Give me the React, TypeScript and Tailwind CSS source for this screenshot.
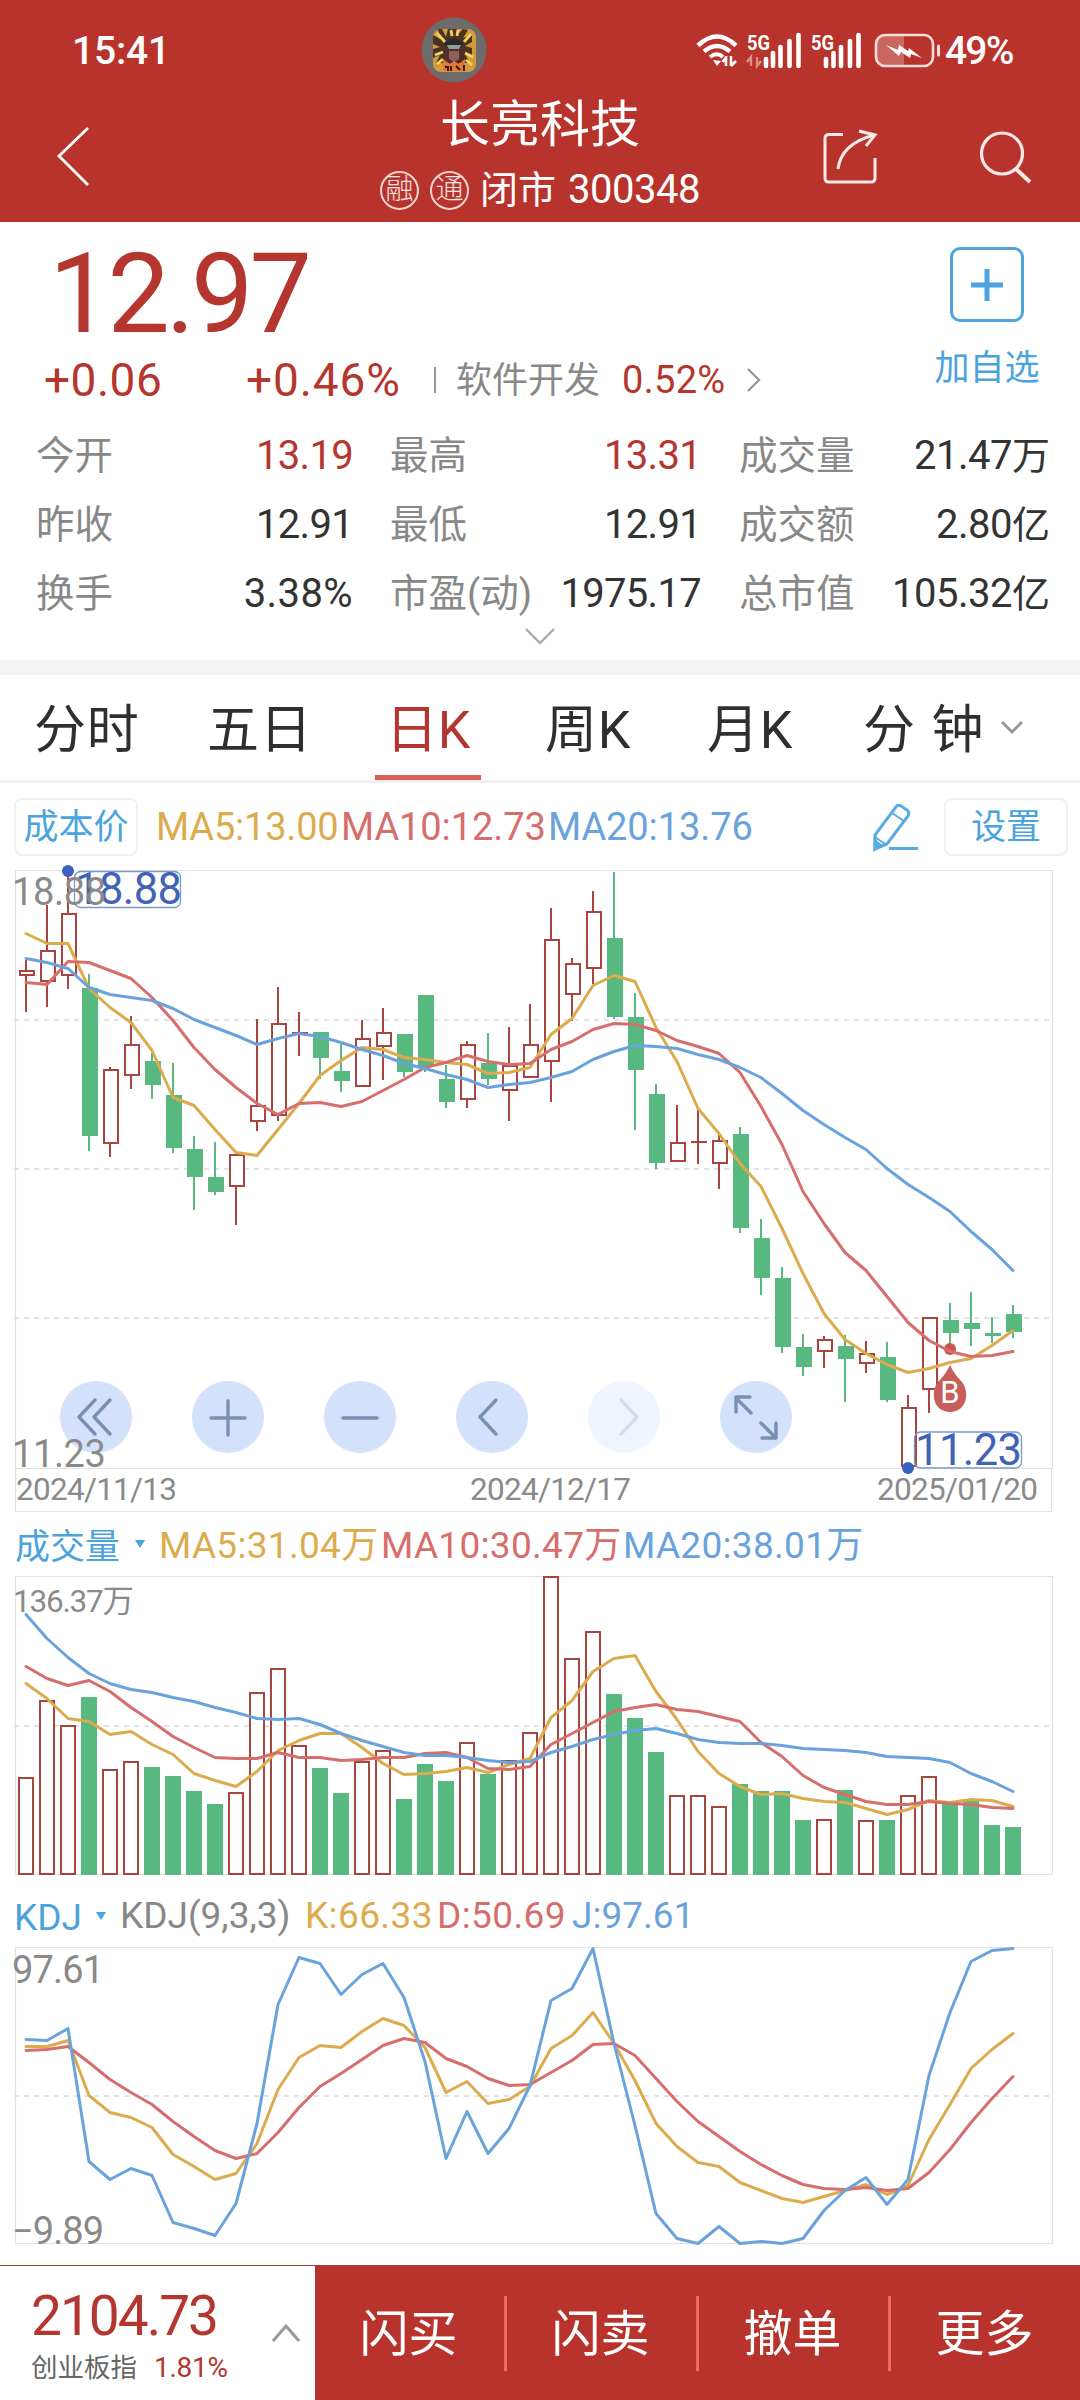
import React from 'react';
import clsx from 'clsx';

const RED = '#a8453e';
const GREEN = '#57b97f';
const YELLOW = '#dcab4e';
const ROSE = '#d66e6b';
const BLUE = '#6aa2dc';
const GRID = '#e2e2e2';

// up/down, high, body top, body bottom, low
type Candle = [string, number, number, number, number];

const candles: Candle[] = [
  ['u', 90, 100, 106, 142], ['u', 35, 80, 112, 137], ['u', 0, 43, 106, 119], ['d', 104, 118, 266, 281],
  ['u', 197, 199, 274, 287], ['u', 146, 174, 206, 219], ['d', 183, 191, 215, 229], ['d', 193, 225, 278, 283],
  ['d', 266, 279, 307, 340], ['d', 272, 307, 322, 325], ['u', 284, 284, 317, 355], ['u', 149, 235, 252, 261],
  ['u', 117, 153, 246, 251], ['u', 142, 162, 164, 186], ['d', 162, 162, 188, 209], ['d', 174, 201, 211, 222],
  ['u', 150, 168, 217, 217], ['u', 138, 162, 177, 210], ['d', 164, 164, 202, 207], ['d', 125, 125, 197, 202],
  ['d', 195, 209, 232, 238], ['u', 171, 174, 230, 238], ['d', 163, 193, 209, 215], ['u', 157, 195, 221, 251],
  ['u', 134, 174, 208, 208], ['u', 38, 69, 192, 232], ['u', 88, 93, 125, 151], ['u', 21, 41, 99, 114],
  ['d', 2, 68, 147, 149], ['d', 123, 147, 200, 260], ['d', 214, 224, 293, 299], ['u', 235, 272, 292, 292],
  ['u', 237, 271, 273, 294], ['u', 263, 270, 294, 319], ['d', 257, 264, 358, 363], ['d', 349, 368, 408, 425],
  ['d', 397, 408, 477, 483], ['d', 464, 477, 497, 506], ['u', 466, 469, 482, 498], ['d', 465, 476, 489, 532],
  ['u', 471, 483, 494, 503], ['d', 472, 487, 530, 532], ['u', 525, 537, 597, 597], ['u', 447, 447, 520, 543],
  ['d', 433, 450, 463, 477], ['d', 422, 453, 459, 476], ['d', 447, 463, 466, 473], ['d', 435, 444, 462, 468],
];

const priceMa = {
  ma5: [63, 73, 73, 118, 137, 152, 180, 227, 235, 259, 282, 285, 259, 233, 205, 190, 177, 179, 187, 189, 192, 194, 203, 202, 197, 164, 148, 115, 105, 111, 157, 191, 238, 263, 293, 316, 358, 403, 443, 469, 483, 494, 502, 498, 492, 488, 475, 460],
  ma10: [112, 114, 91, 92, 100, 108, 127, 150, 177, 199, 217, 233, 244, 233, 232, 236, 231, 220, 209, 197, 192, 185, 191, 194, 193, 179, 171, 159, 153, 154, 160, 170, 176, 183, 202, 236, 274, 321, 353, 382, 400, 426, 452, 470, 481, 486, 485, 481],
  ma20: [88, 92, 98, 117, 124, 127, 130, 138, 149, 157, 165, 174, 168, 163, 166, 172, 179, 185, 193, 198, 204, 209, 217, 214, 212, 207, 201, 189, 181, 175, 176, 178, 184, 189, 197, 207, 223, 240, 254, 267, 279, 298, 314, 327, 341, 361, 379, 400],
};

const volumes = [201, 124, 149, 121, 193, 185, 191, 200, 215, 228, 216, 116, 92, 169, 192, 217, 185, 174, 223, 188, 205, 166, 198, 184, 156, 0, 82, 55, 118, 142, 176, 219, 219, 230, 208, 215, 215, 244, 243, 214, 244, 244, 219, 200, 228, 224, 249, 251];

const volumeMa = {
  ma5: [107, 122, 142, 145, 158, 155, 168, 178, 197, 204, 210, 195, 174, 164, 157, 157, 171, 187, 198, 197, 195, 191, 196, 188, 182, 141, 124, 95, 82, 79, 115, 143, 175, 197, 210, 218, 217, 222, 225, 226, 232, 238, 233, 224, 226, 223, 224, 230],
  ma10: [90, 102, 109, 104, 115, 131, 145, 160, 171, 181, 182, 182, 176, 181, 181, 184, 183, 181, 181, 177, 176, 181, 192, 193, 190, 168, 157, 146, 135, 131, 128, 133, 135, 140, 145, 166, 180, 199, 211, 218, 225, 228, 228, 225, 227, 228, 231, 232],
  ma20: [38, 62, 81, 97, 107, 113, 116, 121, 125, 131, 136, 142, 143, 142, 148, 157, 164, 170, 176, 179, 179, 181, 184, 186, 185, 176, 170, 163, 158, 154, 152, 157, 163, 166, 167, 167, 169, 172, 173, 174, 176, 180, 181, 182, 186, 197, 205, 215],
};

const kdj = {
  k: [99, 99, 93, 148, 165, 170, 180, 207, 219, 232, 226, 196, 142, 110, 98, 100, 84, 71, 78, 100, 145, 134, 156, 152, 139, 101, 88, 65, 96, 133, 176, 199, 215, 219, 235, 243, 251, 255, 249, 243, 237, 247, 238, 192, 157, 121, 102, 86],
  d: [103, 102, 99, 115, 132, 145, 157, 174, 189, 203, 211, 206, 185, 160, 139, 126, 112, 98, 91, 95, 111, 119, 131, 138, 137, 125, 113, 97, 96, 108, 131, 154, 174, 189, 204, 217, 228, 237, 241, 242, 240, 243, 241, 225, 202, 175, 151, 129],
  j: [92, 93, 81, 214, 232, 221, 228, 275, 281, 288, 256, 176, 57, 10, 16, 47, 27, 16, 50, 114, 211, 164, 206, 181, 138, 53, 41, 1, 96, 178, 266, 291, 296, 279, 296, 294, 296, 291, 263, 243, 230, 257, 232, 128, 65, 14, 3, 1],
};

const cx = (i: number) => 26 + i * 21;

const Line = ({ data, color }: { data: number[]; color: string }) => (
  <polyline
    points={data.map((y, i) => `${cx(i)},${y + 0.5}`).join(' ')}
    fill="none"
    stroke={color}
    strokeWidth="3"
    strokeLinejoin="round"
    strokeLinecap="round"
  />
);

const Dashed = ({ y }: { y: number }) => (
  <line x1="14" x2="1049" y1={y} y2={y} stroke={GRID} strokeWidth="2" strokeDasharray="5 5" />
);

type LabelProps = {
  x: number;
  y: number;
  width: number;
  size: number;
  color?: string;
  children: string;
};

const Label = ({ x, y, width, size, color = '#8a8a8a', children }: LabelProps) => (
  <text x={x} y={y} fontSize={size} textLength={width} fill={color}>
    {children}
  </text>
);

const StatusBar = () => (
  <div className="flex h-[84px] items-start text-white">
    <span className="ml-[72px] mt-[28px] w-[349px] text-[39px] font-medium leading-[46px] tracking-[-0.2px]">15:41</span>
    <svg className="mt-[17px] h-[66px] w-[66px]" viewBox="0 0 66 66">
      <circle cx="33" cy="33" r="32.5" fill="#6e6b6c" />
      <rect x="12" y="12" width="43" height="43" rx="8" fill="#d59a3c" />
      <path d="M12 18l7 4-2-10h4l4 8 2-8h9l-1 7 7-7 5 1-5 8 9-3v7l-7 4 7 2v9l-7-3 5 9H15l4-8-7 3V32l7-2-7-3z" fill="#4a3323" />
      <path d="M16 16l8 9M50 17l-7 8M14 38l8-3M52 40l-8-4M30 13l1 6M37 13l-1 6M16 47l6-5M51 48l-6-5" stroke="#f3d35b" strokeWidth="2.8" />
      <path d="M24 27q9-12 18 0v12l-5 9h-8l-5-9z" fill="#51302b" />
      <path d="M23 27q10-11 20 0l-2 2H25z" fill="#2b2a28" />
      <path d="M26 28h14l-2 4H28z" fill="#8fa09a" />
      <path d="M28 34h10v8l-5 3-5-3z" fill="#8f6058" />
      <path d="M22 42l7 5 4-3 5 3 6-5v12H22z" fill="#e07a35" />
      <path d="M24 50h3v4M30 49v5M35 49l4 4M43 48v6" stroke="#231612" strokeWidth="1.8" fill="none" />
    </svg>
    <svg className="ml-[208px] mt-[32px] h-[38px] w-[250px]" viewBox="695 32 250 38" fill="none">
      <path d="M698 45.500q19-18 38 0" stroke="#fff" strokeWidth="4.500" />
      <path d="M704 51.500q13-11 26 0" stroke="#fff" strokeWidth="4.500" />
      <path d="M710 57q7-5.500 13 0" stroke="#fff" strokeWidth="4" />
      <path d="M713 60l8 1-4 5z" fill="#fff" />
      <path d="M726 56v10M726.500 57l-4 5M731 66V56M731 66l5-5" stroke="#fff" strokeWidth="2.600" />
      <path d="M751 66v-9l-4 5M757 57v9l4-5" stroke="#db8d88" strokeWidth="2.400" />
      <path d="M766 66v-7M773 66V53M780.500 66V47M789.500 66V41M798.500 66V35" stroke="#fff" strokeWidth="4.600" strokeLinecap="round" />
      <path d="M826 66v-7M833.500 66V53M841 66V47M850 66V41M858.500 66V35" stroke="#fff" strokeWidth="4.600" strokeLinecap="round" />
      <text x="747" y="50" fontSize="20" fontWeight="700" fill="#fff" textLength="23" lengthAdjust="spacingAndGlyphs">5G</text>
      <text x="811" y="50" fontSize="20" fontWeight="700" fill="#fff" textLength="23" lengthAdjust="spacingAndGlyphs">5G</text>
      <path d="M885 35h19v31h-19q-9 0-9-9V44q0-9 9-9z" fill="#cb6661" />
      <rect x="876" y="35" width="57" height="31" rx="9" stroke="#f7dedd" strokeWidth="2.600" />
      <path d="M938.500 46v9" stroke="#f7dedd" strokeWidth="3" strokeLinecap="round" />
      <path d="M886 45l12 5 1-5 9 6 1-3 13 10-11-4-1 4-9-6-2 4z" fill="#fff" />
    </svg>
    <span className="mt-[28px] text-[39px] font-medium leading-[46px] tracking-[-1.8px]">49%</span>
  </div>
);

const TitleBar = () => (
  <div className="flex h-[138px] items-start text-white">
    <svg className="ml-[55px] mt-[42px] h-[62px] w-[38px]" viewBox="0 0 38 62" fill="none" stroke="#fff" strokeWidth="2.8">
      <path d="M33 2L4 30l29 29" />
    </svg>
    <div className="ml-[286px] flex w-[322px] flex-col items-center">
      <h1 className="mt-[13px] text-[50px] leading-[56px]">长亮科技</h1>
      <div className="mt-[9px] flex h-[56px] items-center whitespace-nowrap">
        <span className="flex h-[39px] w-[39px] items-center justify-center rounded-full border-2 border-[#f3d5d3] text-[28px] font-light leading-none text-[#f7e4e3]">融</span>
        <span className="ml-[11px] flex h-[39px] w-[39px] items-center justify-center rounded-full border-2 border-[#f3d5d3] text-[28px] font-light leading-none text-[#f7e4e3]">通</span>
        <span className="ml-[11px] text-[38px]">闭市</span>
        <span className="ml-[12px] text-[40px] tracking-[-0.5px]">300348</span>
      </div>
    </div>
    <svg className="ml-[119px] mt-[44px] h-[60px] w-[60px]" viewBox="820 128 60 60" fill="none" stroke="#fbe9e8" strokeWidth="3">
      <path d="M843 134.500h-14q-4 0-4 4V178q0 4 4 4h42q4 0 4-4v-20" />
      <path d="M838 169q3-25 36-34M859 131l16 4-9 11" />
    </svg>
    <svg className="ml-[96px] mt-[44px] h-[60px] w-[60px]" viewBox="976 128 60 60" fill="none" stroke="#fbe9e8" strokeWidth="3.2">
      <circle cx="1002" cy="153.500" r="20.500" />
      <path d="M1016 169l14 13" strokeWidth="4" />
    </svg>
  </div>
);

const stats = [
  ['今开', '13.19', '最高', '13.31', '成交量', '21.47', '万'],
  ['昨收', '12.91', '最低', '12.91', '成交额', '2.80', '亿'],
  ['换手', '3.38%', '市盈(动)', '1975.17', '总市值', '105.32', '亿'],
];

const Quote = () => (
  <section className="h-[438px] bg-white">
    <div className="flex h-[200px] justify-between">
      <div>
        <div className="ml-[49px] mt-[7px] h-[131px] text-[111px] leading-[131px] tracking-[-4px] text-[#b5362e]">12.97</div>
        <div className="mt-[-3px] flex h-[46px] items-center whitespace-nowrap text-[#b5362e]">
          <span className="ml-[44px] w-[202px] text-[46px] tracking-[0.5px]">+0.06</span>
          <span className="w-[188px] text-[46px] tracking-[0.9px]">+0.46%</span>
          <span className="h-[26px] w-[2px] bg-[#999]" />
          <span className="ml-[20px] mt-[2px] text-[36px] text-[#888]">软件开发</span>
          <span className="ml-[22px] w-[124px] text-[38px] tracking-[0.3px]">0.52%</span>
          <svg className="h-[26px] w-[16px]" viewBox="0 0 16 26" fill="none" stroke="#999" strokeWidth="2.4">
            <path d="M2 2l11 11L2 24" />
          </svg>
        </div>
      </div>
      <div className="mr-[41px] flex w-[104px] flex-col items-center">
        <div className="mt-[25px] flex h-[75px] w-[74px] items-center justify-center rounded-[10px] border-[3px] border-[#4fa3dd]">
          <svg className="h-[34px] w-[34px]" viewBox="0 0 34 34" stroke="#4ba3e3" strokeWidth="5">
            <path d="M17 1v32M1 17h32" />
          </svg>
        </div>
        <span className="mt-[22px] whitespace-nowrap text-[35px] leading-[50px] text-[#4ba3dd]">加自选</span>
      </div>
    </div>
    <div className="flex flex-col">
      {stats.map((row, i) => (
        <div key={row[0]} className="flex h-[69px] items-center pb-[2px] text-[38.5px] text-[#888]">
          <div className="ml-[36px] flex w-[317px] items-center justify-between">
            <span>{row[0]}</span>
            <span className={clsx('text-[40px]', i === 0 && 'tracking-[-0.7px] text-[#b5362e]', i === 1 && 'tracking-[-0.7px] text-[#333]', i === 2 && 'tracking-[0.4px] text-[#333]')}>{row[1]}</span>
          </div>
          <div className="ml-[37px] flex w-[311px] items-center justify-between">
            <span>{row[2]}</span>
            <span className={clsx('text-[40px] tracking-[-0.7px]', i === 0 ? 'text-[#b5362e]' : 'text-[#333]')}>{row[3]}</span>
          </div>
          <div className="ml-[38px] flex w-[311px] items-center justify-between">
            <span>{row[4]}</span>
            <span className="text-[38px] text-[#333]">
              <span className="text-[40px] tracking-[-0.5px]">{row[5]}</span>
              {row[6]}
            </span>
          </div>
        </div>
      ))}
    </div>
    <svg className="mx-auto mt-[-1px] h-[18px] w-[32px]" viewBox="0 0 32 18" fill="none" stroke="#aaa" strokeWidth="2.4">
      <path d="M2 1l14 14L30 1" />
    </svg>
  </section>
);

const Tabs = () => (
  <nav className="flex h-[108px] items-center whitespace-nowrap border-b-[3px] border-[#f1f1f1] text-[52px] text-[#2f2f2f]">
    <span className="ml-[34px] mt-[6px] w-[173px] tracking-[0.8px]">分时</span>
    <span className="mt-[6px] w-[168px] tracking-[0.8px]">五日</span>
    <span className="relative flex h-[105px] w-[106px] items-center justify-center pt-[6px] text-[#b5362e]">
      日K
      <span className="absolute bottom-0 left-0 h-[5px] w-[106px] bg-[#d9605a]" />
    </span>
    <span className="ml-[64px] mt-[6px] w-[162px] tracking-[0.8px]">周K</span>
    <span className="mt-[6px] w-[156px] tracking-[0.8px]">月K</span>
    <span className="mt-[6px] w-[138px] tracking-[1.8px]">分 钟</span>
    <svg className="h-[14px] w-[22px]" viewBox="0 0 22 14" fill="none" stroke="#999" strokeWidth="3">
      <path d="M1 1l10 10L21 1" />
    </svg>
  </nav>
);

const MaRow = () => (
  <div className="flex h-[87px] items-start pt-[15px] text-[38px]">
    <button className="ml-[14px] h-[58px] w-[124px] whitespace-nowrap rounded-lg border-2 border-[#f0f0f0] text-[35px] leading-[55px] text-[#4ba3dd]">成本价</button>
    <div className="ml-[18px] mt-[1px] flex h-[56px] w-[717px] items-center whitespace-nowrap">
      <span className="w-[185px] tracking-[-0.2px] text-[#dcab4e]">MA5:13.00</span>
      <span className="w-[207px] tracking-[-0.1px] text-[#d66e6b]">MA10:12.73</span>
      <span className="tracking-[-0.1px] text-[#6aa2dc]">MA20:13.76</span>
    </div>
    <svg className="mt-[6px] h-[48px] w-[48px]" viewBox="873 804 48 48" fill="none" stroke="#59abe2" strokeWidth="3">
      <path d="M875 835l21-28q2-3 5-1l6 4q3 2 1 6l-21 28-12 5z" />
      <path d="M892 813l12 8M875 837l10 7" strokeWidth="2" />
      <path d="M875 841l5 4-5 4z" fill="#59abe2" />
      <path d="M889 848.500h29" />
    </svg>
    <button className="ml-[23px] h-[58px] w-[124px] rounded-lg border-2 border-[#f0f0f0] text-[35px] leading-[55px] text-[#4ba3dd]">设置</button>
  </div>
);

const ControlIcon = ({ name }: { name: string }) => (
  <svg className="h-[72px] w-[72px]" viewBox="0 0 72 72" fill="none" stroke={name === 'next' ? '#d3dce9' : '#7a8fb4'} strokeWidth="3.4" strokeLinecap="round" strokeLinejoin="round">
    {name === 'first' && <path d="M35 19L19 36l16 17M50 19L34 36l16 17" />}
    {name === 'plus' && <path d="M36 20v34M19 37h34" />}
    {name === 'minus' && <path d="M19 37h34" />}
    {name === 'prev' && <path d="M40 19L24 36l16 17" />}
    {name === 'next' && <path d="M33 19l16 17-16 17" />}
    {name === 'expand' && <path d="M31 32L16 17M30 16H16v15M41 42l15 15M42 57h14V42" />}
  </svg>
);

const PriceChart = () => (
  <section className="relative h-[642px]">
    <svg className="block h-[642px] w-[1080px] overflow-visible" viewBox="0 0 1080 642">
      <path d="M15.500 0.500H1052.500V598.500H15.500zM1051.500 598.500V641.500H15.500V598" fill="none" stroke={GRID} strokeWidth="1.2" />
      <Dashed y={150} />
      <Dashed y={299} />
      <Dashed y={448} />
      {candles.map(([dir, high, top, bottom, low], i) => {
        const x = cx(i);
        if (dir === 'd') {
          return (
            <g key={i} fill={GREEN}>
              <rect x={x - 1} y={high} width="2" height={low - high} />
              <rect x={x - 7} y={top} width="16" height={bottom - top} />
            </g>
          );
        }
        return (
          <g key={i} fill={RED}>
            <rect x={x - 1} y={high} width="2" height={top - high} />
            <rect x={x - 1} y={bottom} width="2" height={low - bottom} />
            {bottom - top > 2 ? (
              <rect x={x - 6} y={top + 1} width="14" height={bottom - top - 2} fill="#fff" stroke={RED} strokeWidth="2" />
            ) : (
              <rect x={x - 7} y={top} width="16" height="2" />
            )}
          </g>
        );
      })}
      <circle cx="950" cy="479" r="6" fill="#c95450" />
      <Line data={priceMa.ma5} color={YELLOW} />
      <Line data={priceMa.ma10} color={ROSE} />
      <Line data={priceMa.ma20} color={BLUE} />
      <path d="M950 495q4 9 12 17c8 10 5 30-12 30s-20-20-12-30q8-8 12-17z" fill="#c75e59" />
      <text x="950" y="533" fontSize="31" fill="#fff" textAnchor="middle">B</text>
      <circle cx="68" cy="1" r="6" fill="#3c61c0" />
      <rect x="74.500" y="1.500" width="106" height="36" rx="6" fill="none" stroke="#7d97cb" strokeWidth="1.3" />
      <Label x={75} y={34} width={107} size={43.5} color="#4163b5">18.88</Label>
      <Label x={12} y={34.5} width={94} size={38}>18.88</Label>
      <circle cx="908" cy="598" r="6" fill="#3c61c0" />
      <rect x="914.500" y="562" width="107" height="36" rx="6" fill="none" stroke="#7d97cb" strokeWidth="1.3" />
      <Label x={915} y={594.5} width={107} size={43.5} color="#4163b5">11.23</Label>
      <Label x={16} y={630} width={161} size={31.5}>2024/11/13</Label>
      <Label x={470} y={630} width={161} size={31.5}>2024/12/17</Label>
      <Label x={877} y={630} width={161} size={31.5}>2025/01/20</Label>
    </svg>
    <div className="absolute left-[60px] top-[511px] flex gap-[60px]">
      {['first', 'plus', 'minus', 'prev', 'next', 'expand'].map((name) => (
        <button key={name} className={clsx('h-[72px] w-[72px] rounded-full', name === 'next' ? 'bg-[#eef5fe]' : 'bg-[#d4e1fa]')}>
          <ControlIcon name={name} />
        </button>
      ))}
    </div>
    <span className="absolute left-[12px] top-[562px] text-[38px] leading-[45px] tracking-[-0.4px] text-[#8a8a8a]">11.23</span>
  </section>
);

const Caret = () => (
  <svg className="h-[8px] w-[10px]" viewBox="0 0 10 8" fill="#4ba3dd">
    <path d="M0 0h10L5 8z" />
  </svg>
);

const VolumeChart = () => (
  <section>
    <div className="flex h-[64px] items-center whitespace-nowrap text-[37px]">
      <span className="ml-[15px] mt-[8px] w-[120px] text-[35px] text-[#4ba3dd]">成交量</span>
      <Caret />
      <span className="ml-[14px] mt-[3px] w-[222px] tracking-[0.3px] text-[#dcab4e]">MA5:31.04万</span>
      <span className="mt-[3px] w-[242px] tracking-[0.3px] text-[#d66e6b]">MA10:30.47万</span>
      <span className="mt-[3px] tracking-[0.3px] text-[#6aa2dc]">MA20:38.01万</span>
    </div>
    <svg className="block h-[299px] w-[1080px]" viewBox="0 0 1080 299">
      <rect x="15.500" y="0.500" width="1037" height="298" fill="none" stroke={GRID} strokeWidth="1.2" />
      <Dashed y={150} />
      {volumes.map((y, i) =>
        candles[i][0] === 'd' ? (
          <rect key={i} x={cx(i) - 8} y={y} width="16" height={299 - y} fill={GREEN} />
        ) : (
          <rect key={i} x={cx(i) - 7} y={y + 1} width="14" height={297 - y} fill="#fff" stroke={RED} strokeWidth="2" />
        ),
      )}
      <Line data={volumeMa.ma5} color={YELLOW} />
      <Line data={volumeMa.ma10} color={ROSE} />
      <Line data={volumeMa.ma20} color={BLUE} />
      <Label x={13} y={36} width={121} size={31.5}>136.37万</Label>
    </svg>
  </section>
);

const KdjChart = () => (
  <section>
    <div className="flex h-[72px] items-center whitespace-nowrap pt-[10px] text-[37px]">
      <span className="ml-[14px] mt-[4px] w-[82px] text-[#4ba3dd]">KDJ</span>
      <Caret />
      <span className="ml-[14px] w-[185px] text-[#888]">KDJ(9,3,3)</span>
      <span className="w-[132px] tracking-[0.4px] text-[#dcab4e]">K:66.33</span>
      <span className="w-[135px] tracking-[0.4px] text-[#d66e6b]">D:50.69</span>
      <span className="text-[#6aa2dc]">J:97.61</span>
    </div>
    <svg className="block h-[297px] w-[1080px] overflow-visible" viewBox="0 0 1080 297">
      <rect x="15.500" y="0.500" width="1037" height="296" fill="none" stroke={GRID} strokeWidth="1.2" />
      <Dashed y={149} />
      <Line data={kdj.k} color={YELLOW} />
      <Line data={kdj.d} color={ROSE} />
      <Line data={kdj.j} color={BLUE} />
      <Label x={12} y={36} width={92} size={38}>97.61</Label>
      <Label x={12} y={297} width={92} size={38}>−9.89</Label>
    </svg>
  </section>
);

const BottomBar = () => (
  <footer className="mt-[21px] flex h-[135px] border-t border-[#8f3f38]">
    <div className="flex w-[315px] items-start bg-white">
      <div className="w-[272px]">
        <div className="ml-[31px] mt-[18px] h-[65px] text-[55px] leading-[65px] tracking-[-2px] text-[#b5362e]">2104.73</div>
        <div className="ml-[31px] flex items-center whitespace-nowrap leading-[38px]">
          <span className="text-[26.5px] text-[#666]">创业板指</span>
          <span className="ml-[17px] text-[28px] tracking-[-0.3px] text-[#b5362e]">1.81%</span>
        </div>
      </div>
      <svg className="mt-[57px] h-[20px] w-[28px]" viewBox="0 0 28 20" fill="none" stroke="#999" strokeWidth="3">
        <path d="M1 18L14 3l13 15" />
      </svg>
    </div>
    <div className="flex flex-1 items-center bg-[#b9332d] text-[49px] text-white">
      {['闪买', '闪卖', '撤单', '更多'].map((label, i) => (
        <React.Fragment key={label}>
          {i > 0 && <span className="h-[75px] w-[3px] bg-[#ee6a5b]" />}
          <span className="mt-[3px] flex-1 pr-[2px] text-center">{label}</span>
        </React.Fragment>
      ))}
    </div>
  </footer>
);

const App = () => (
  <main className="h-[2400px] w-[1080px] overflow-hidden bg-white font-['Roboto','Noto_Sans_CJK_SC',sans-serif] font-normal">
    <header className="h-[222px] bg-[#b9332d]">
      <StatusBar />
      <TitleBar />
    </header>
    <Quote />
    <div className="h-[15px] bg-[#f4f4f4]" />
    <Tabs />
    <MaRow />
    <PriceChart />
    <VolumeChart />
    <KdjChart />
    <BottomBar />
  </main>
);

export default App;
